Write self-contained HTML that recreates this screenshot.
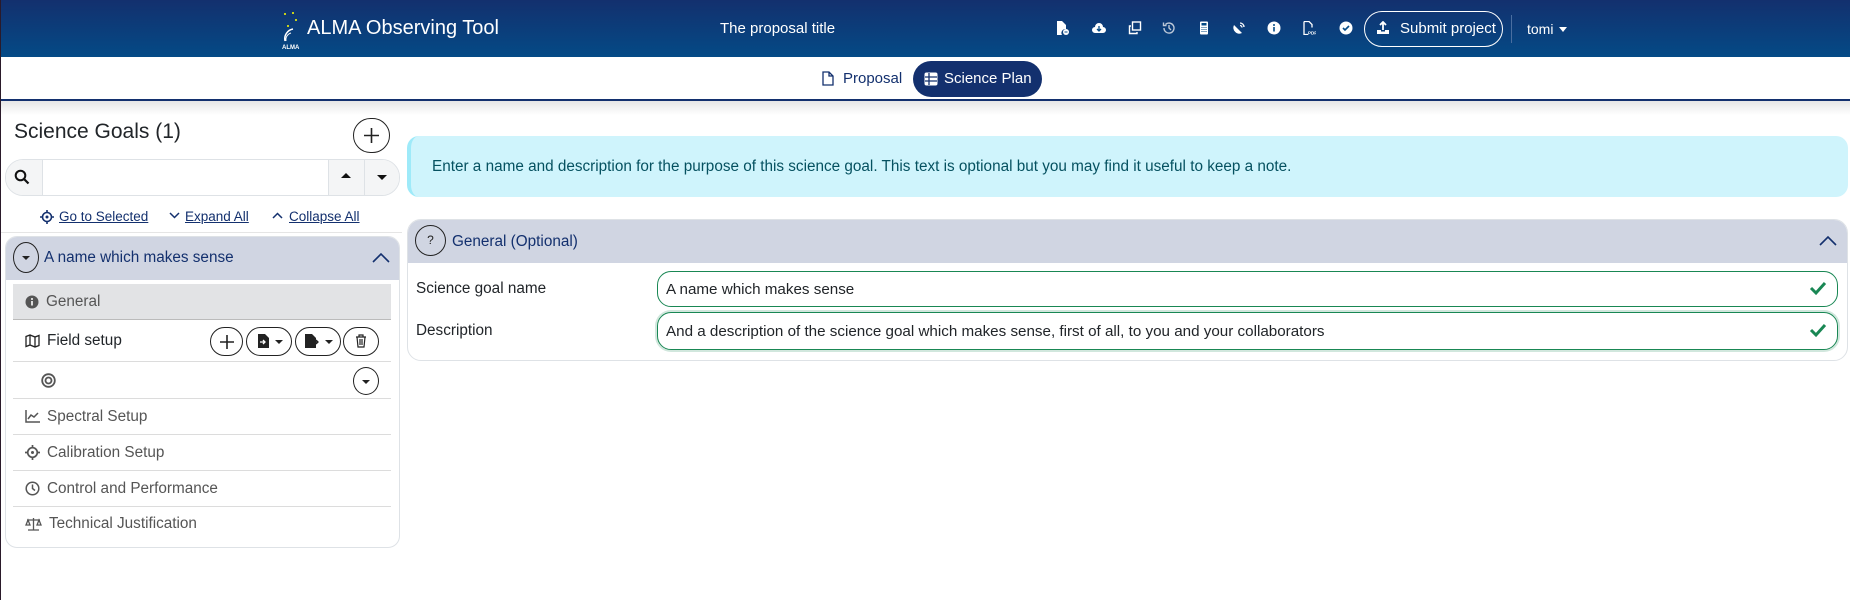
<!DOCTYPE html>
<html><head><meta charset="utf-8">
<style>
*{box-sizing:border-box;margin:0;padding:0}
body{width:1850px;height:600px;overflow:hidden;background:#fff;font-family:"Liberation Sans",sans-serif;position:relative;border-left:1px solid #2a1a2a}
.a{position:absolute}
.hdr{left:0;top:0;width:1850px;height:57px;background:linear-gradient(#13306e,#044a86)}
.w{color:#fff}
.ic{position:absolute;top:21px;width:14px;height:14px}
.nav{top:57px;left:0;width:1850px;height:42px;background:#fff}
.line{top:99px;left:0;width:1850px;height:2px;background:#13306e}
.shadow{top:101px;left:0;width:1850px;height:14px;background:linear-gradient(#e6e6e6,#fff)}
.btnc{position:absolute;border:1px solid #222;border-radius:16px;background:#fff}
.item{position:absolute;left:12px;width:378px;border-bottom:1px solid #dcdcdc;font-size:15.3px;color:#555;display:flex;align-items:center;padding-left:12px}
.item svg{margin-right:7px}
.lnk{position:absolute;top:209px;font-size:13.5px;color:#13306e;text-decoration:underline}
.inp{position:absolute;left:656px;width:1181px;border:1px solid #198754;border-radius:14px;font-size:15.2px;color:#212529;padding-left:8px;display:flex;align-items:center}
.chk{position:absolute;right:10px;top:50%;margin-top:-9px}
</style></head><body>
<div class="a hdr"></div>
<svg class="a" style="left:278px;top:9px" width="26" height="42" viewBox="0 0 26 42"><circle cx="6" cy="5" r="1" fill="#ff0"/><circle cx="14" cy="4" r="1" fill="#ff0"/><circle cx="17" cy="11" r="1" fill="#ff0"/><circle cx="9" cy="17" r="1" fill="#ff0"/><path d="M14 20 A10 10 0 0 0 6 32" stroke="#fff" fill="none" stroke-width="1.5"/><path d="M12 24 A7 7 0 0 0 7 32" stroke="#fff" fill="none"/><text x="3" y="40" font-size="6" fill="#fff" font-family="Liberation Sans" font-weight="bold">ALMA</text></svg>
<div class="a w" style="left:306px;top:17px;font-size:20px">ALMA Observing Tool</div>
<div class="a w" style="left:719px;top:20px;font-size:15px">The proposal title</div>
<svg class="ic" style="left:1054px" viewBox="0 0 14 14"><path d="M2 0h5l4 4v4a4 4 0 0 0-4 6H2z" fill="#fff"/><circle cx="11" cy="11" r="3" fill="#fff"/><path d="M9.5 11h3" stroke="#044a86"/></svg>
<svg class="ic" style="left:1091px" viewBox="0 0 14 14"><path d="M3 12a3 3 0 0 1 0-6 4 4 0 0 1 8 0 3 3 0 0 1 0 6z" fill="#fff"/><path d="M7 5v5M5 8l2 2 2-2" stroke="#044a86" fill="none" stroke-width="1.3"/></svg>
<svg class="ic" style="left:1127px" viewBox="0 0 14 14"><rect x="4.5" y="1" width="8" height="8" fill="none" stroke="#fff" stroke-width="1.4"/><path d="M3 5H1.5v7.5H9V11" fill="none" stroke="#fff" stroke-width="1.4"/></svg>
<svg class="ic" style="left:1161px" viewBox="0 0 14 14"><path d="M2 7a5 5 0 1 0 1.5-3.5M1.5 1.5v3h3M7 4v3l2 2" fill="none" stroke="#bcc8d8" stroke-width="1.4"/></svg>
<svg class="ic" style="left:1196px" viewBox="0 0 14 14"><rect x="3" y="0.5" width="8" height="13" rx="1" fill="#fff"/><rect x="4.5" y="2" width="5" height="2.5" fill="#044a86"/><path d="M4.5 6.5h1M6.5 6.5h1M8.5 6.5h1M4.5 8.5h1M6.5 8.5h1M8.5 8.5h1M4.5 10.5h1M6.5 10.5h1M8.5 10.5h1" stroke="#044a86"/></svg>
<svg class="ic" style="left:1231px" viewBox="0 0 14 14"><path d="M2 4l8 8A6 6 0 0 1 2 4z" fill="#fff"/><path d="M8 2a4 4 0 0 1 4 4M8 4.5a2 2 0 0 1 2 2" stroke="#fff" fill="none" stroke-width="1.3"/></svg>
<svg class="ic" style="left:1266px" viewBox="0 0 14 14"><circle cx="7" cy="7" r="6.5" fill="#fff"/><rect x="6.2" y="6" width="1.6" height="4.5" fill="#044a86"/><circle cx="7" cy="4" r="1" fill="#044a86"/></svg>
<svg class="ic" style="left:1301px" viewBox="0 0 14 14"><path d="M2 0.5h5l3 3v3M2 0.5v13h4" fill="none" stroke="#fff" stroke-width="1.3"/><text x="6" y="13.5" font-size="4.5" fill="#fff" font-family="Liberation Sans" font-weight="bold">PDF</text></svg>
<svg class="ic" style="left:1338px" viewBox="0 0 14 14"><circle cx="7" cy="7" r="6.5" fill="#fff"/><path d="M4 7l2 2 4-4" stroke="#044a86" fill="none" stroke-width="1.6"/></svg>
<div class="a w" style="left:1363px;top:11px;width:139px;height:36px;border:1px solid #fff;border-radius:18px;font-size:15px;padding-left:35px;line-height:34px">Submit project</div>
<svg class="a" style="left:1375px;top:21px" width="14" height="14" viewBox="0 0 14 14"><path d="M7 1v8M4 4l3-3 3 3" stroke="#fff" fill="none" stroke-width="1.8"/><path d="M1 9h4v1.5h4V9h4v4H1z" fill="#fff"/></svg>
<div class="a" style="left:1510px;top:15px;width:1px;height:28px;background:#4a6ea0"></div>
<div class="a w" style="left:1526px;top:21px;font-size:14px">tomi</div>
<div class="a" style="left:1558px;top:27px;border:4px solid transparent;border-top:5px solid #fff"></div>
<div class="a nav"></div>
<svg class="a" style="left:821px;top:71px" width="12" height="15" viewBox="0 0 12 15"><path d="M1 1h6l4 4v9H1z M7 1v4h4" fill="none" stroke="#13306e" stroke-width="1.3"/></svg>
<div class="a" style="left:842px;top:70px;font-size:15px;color:#13306e">Proposal</div>
<div class="a" style="left:912px;top:61px;width:129px;height:36px;background:#13306e;border-radius:18px;color:#fff;font-size:15px;line-height:36px;padding-left:31px">Science Plan</div>
<svg class="a" style="left:923px;top:72px" width="14" height="14" viewBox="0 0 14 14"><rect x="0.5" y="0.5" width="13" height="13" rx="2" fill="#fff"/><path d="M1 5h12M1 9h12M5 1v12" stroke="#13306e" stroke-width="1.3"/></svg>
<div class="a line"></div>
<div class="a shadow"></div>

<div class="a" style="left:13px;top:120px;font-size:21px;color:#212529">Science Goals (1)</div>
<div class="btnc" style="left:352px;top:118px;width:37px;height:35px;border-radius:18px"></div>
<svg class="a" style="left:362px;top:127px" width="17" height="17"><path d="M8.5 1v15M1 8.5h15" stroke="#222" stroke-width="1.6"/></svg>
<div class="a" style="left:4px;top:159px;width:395px;height:37px;border:1px solid #dee2e6;border-radius:18px;background:#fff;overflow:hidden">
 <div class="a" style="left:0;top:0;width:37px;height:35px;background:#f4f5f6;border-right:1px solid #dee2e6"></div>
 <div class="a" style="left:322px;top:0;width:36px;height:35px;background:#f4f5f6;border-left:1px solid #dee2e6"></div>
 <div class="a" style="left:358px;top:0;width:36px;height:35px;background:#f4f5f6;border-left:1px solid #dee2e6"></div>
 <div class="a" style="left:335px;top:13px;border:5px solid transparent;border-bottom:5px solid #111;border-top:0"></div>
 <div class="a" style="left:371px;top:15px;border:5px solid transparent;border-top:5px solid #111;border-bottom:0"></div>
</div>
<svg class="a" style="left:13px;top:169px" width="16" height="16"><circle cx="6.5" cy="6.5" r="4.8" fill="none" stroke="#111" stroke-width="2"/><path d="M10 10l4.5 4.5" stroke="#111" stroke-width="2.2"/></svg>
<svg class="a" style="left:39px;top:210px" width="14" height="14"><circle cx="7" cy="7" r="4.5" fill="none" stroke="#13306e" stroke-width="1.6"/><circle cx="7" cy="7" r="1.5" fill="#13306e"/><path d="M7 0v3M7 11v3M0 7h3M11 7h3" stroke="#13306e" stroke-width="1.6"/></svg>
<div class="lnk" style="left:58px">Go to Selected</div>
<svg class="a" style="left:168px;top:212px" width="11" height="8"><path d="M1 1l4.5 4.5L10 1" stroke="#13306e" fill="none" stroke-width="1.5"/></svg>
<div class="lnk" style="left:184px">Expand All</div>
<svg class="a" style="left:271px;top:212px" width="11" height="8"><path d="M1 6l4.5-4.5L10 6" stroke="#13306e" fill="none" stroke-width="1.5"/></svg>
<div class="lnk" style="left:288px">Collapse All</div>
<div class="a" style="left:0;top:232px;width:401px;height:1px;background:#e5e5e5"></div>

<div class="a" style="left:4px;top:236px;width:395px;height:312px;border:1px solid #dee2e6;border-radius:12px;overflow:hidden">
 <div class="a" style="left:0;top:0;width:395px;height:43px;background:#d0d5e2"></div>
</div>
<div class="btnc" style="left:12px;top:242px;width:26px;height:31px;border-radius:50%;background:transparent"></div>
<div class="a" style="left:21px;top:256px;border:4px solid transparent;border-top:4px solid #222;border-bottom:0"></div>
<div class="a" style="left:43px;top:249px;font-size:15.3px;color:#13306e">A name which makes sense</div>
<svg class="a" style="left:371px;top:252px" width="18" height="11"><path d="M1 10l8-8 8 8" stroke="#13306e" fill="none" stroke-width="1.6"/></svg>

<div class="item" style="top:284px;height:36px;background:#e2e3e5;border-bottom:1px solid #bbb"><svg width="14" height="14"><circle cx="7" cy="7" r="6.5" fill="#555"/><rect x="6.2" y="6" width="1.6" height="4.5" fill="#fff"/><circle cx="7" cy="4" r="1" fill="#fff"/></svg>General</div>
<div class="item" style="top:321px;height:41px;color:#212529"><svg width="15" height="14"><path d="M1 2.5l4-1.5 5 2 4-1.5v10l-4 1.5-5-2-4 1.5zM5 1v10M10 3v10" fill="none" stroke="#222" stroke-width="1.3"/></svg>Field setup</div>
<div class="btnc" style="left:209px;top:327px;width:33px;height:29px"></div>
<svg class="a" style="left:219px;top:335px" width="14" height="14"><path d="M7 0v14M0 7h14" stroke="#222" stroke-width="1.6"/></svg>
<div class="btnc" style="left:245px;top:327px;width:46px;height:29px"></div>
<svg class="a" style="left:257px;top:334px" width="11" height="14"><path d="M0 0h7l4 4v10H0z" fill="#222"/><path d="M2 8h5M5 6l2 2-2 2" stroke="#fff" fill="none" stroke-width="1.3"/></svg>
<div class="a" style="left:274px;top:340px;border:4px solid transparent;border-top:4px solid #222;border-bottom:0"></div>
<div class="btnc" style="left:294px;top:327px;width:46px;height:29px"></div>
<svg class="a" style="left:304px;top:334px" width="14" height="14"><path d="M0 0h7l4 4v10H0z" fill="#222"/><path d="M7 8h6M11 6l2 2-2 2" stroke="#222" fill="none" stroke-width="1.3"/></svg>
<div class="a" style="left:324px;top:340px;border:4px solid transparent;border-top:4px solid #222;border-bottom:0"></div>
<div class="btnc" style="left:342px;top:327px;width:36px;height:29px"></div>
<svg class="a" style="left:354px;top:334px" width="12" height="14"><path d="M1 3h10M4 3V1h4v2M2 3l1 10h6l1-10M5 5v6M7 5v6" stroke="#222" fill="none" stroke-width="1.2"/></svg>
<div class="item" style="top:362px;height:37px"></div>
<svg class="a" style="left:40px;top:373px" width="15" height="15"><circle cx="7.5" cy="7.5" r="6.3" fill="none" stroke="#555" stroke-width="1.8"/><circle cx="7.5" cy="7.5" r="3" fill="none" stroke="#555" stroke-width="1.8"/></svg>
<div class="btnc" style="left:352px;top:367px;width:26px;height:28px;border-radius:50%"></div>
<div class="a" style="left:361px;top:380px;border:4px solid transparent;border-top:4px solid #222;border-bottom:0"></div>
<div class="item" style="top:399px;height:36px"><svg width="15" height="13"><path d="M1 0v12h14M3 9l3-4 3 2 4-4" stroke="#555" fill="none" stroke-width="1.5"/></svg>Spectral Setup</div>
<div class="item" style="top:435px;height:36px"><svg width="15" height="15"><circle cx="7.5" cy="7.5" r="4.8" fill="none" stroke="#555" stroke-width="1.7"/><circle cx="7.5" cy="7.5" r="1.5" fill="#555"/><path d="M7.5 0v3.5M7.5 11.5v3.5M0 7.5h3.5M11.5 7.5h3.5" stroke="#555" stroke-width="1.7"/></svg>Calibration Setup</div>
<div class="item" style="top:471px;height:36px"><svg width="15" height="15"><circle cx="7.5" cy="7.5" r="6.3" fill="none" stroke="#555" stroke-width="1.5"/><path d="M7.5 3.5v4l2.5 2" stroke="#555" fill="none" stroke-width="1.5"/></svg>Control and Performance</div>
<div class="item" style="top:507px;height:34px;border-bottom:0"><svg width="17" height="14"><path d="M8.5 1v12M3 13h11M2 3h13M3 3l-2 5h4zM14 3l-2 5h4z" stroke="#555" fill="none" stroke-width="1.3"/></svg>Technical Justification</div>

<div class="a" style="left:406px;top:136px;width:1441px;height:61px;background:#cff4fc;border-radius:12px;border-left:4px solid #9eeaf9"></div>
<div class="a" style="left:431px;top:158px;font-size:15.3px;color:#055160">Enter a name and description for the purpose of this science goal. This text is optional but you may find it useful to keep a note.</div>

<div class="a" style="left:406px;top:219px;width:1441px;height:142px;border:1px solid #dee2e6;border-radius:14px;overflow:hidden">
 <div class="a" style="left:0;top:0;width:1441px;height:43px;background:#d0d5e2"></div>
</div>
<div class="btnc" style="left:414px;top:225px;width:31px;height:31px;border-radius:50%;background:transparent;font-size:12px;text-align:center;line-height:29px;color:#222">?</div>
<div class="a" style="left:451px;top:233px;font-size:15.3px;color:#13306e">General (Optional)</div>
<svg class="a" style="left:1818px;top:235px" width="18" height="11"><path d="M1 10l8-8 8 8" stroke="#13306e" fill="none" stroke-width="1.6"/></svg>
<div class="a" style="left:415px;top:280px;font-size:15.3px;color:#212529">Science goal name</div>
<div class="a" style="left:415px;top:322px;font-size:15.3px;color:#212529">Description</div>
<div class="inp" style="top:271px;height:36px">A name which makes sense<svg class="chk" width="18" height="16"><path d="M2 8l5 5 9-10" stroke="#198754" fill="none" stroke-width="3"/></svg></div>
<div class="inp" style="top:312px;height:38px;box-shadow:0 0 0 2px #d1e7dd">And a description of the science goal which makes sense, first of all, to you and your collaborators<svg class="chk" width="18" height="16"><path d="M2 8l5 5 9-10" stroke="#198754" fill="none" stroke-width="3"/></svg></div>
</body></html>
